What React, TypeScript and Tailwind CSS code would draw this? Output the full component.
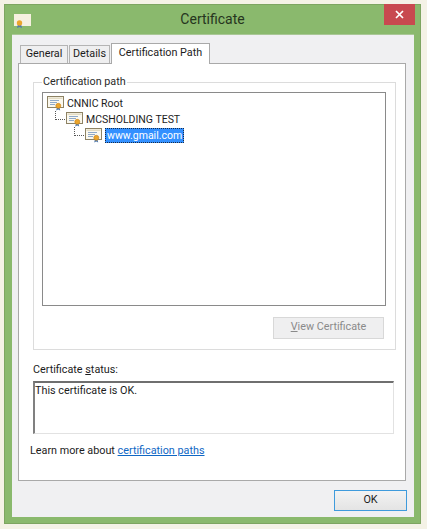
import React from "react";

function CertIcon({ className }: { className?: string }) {
    return (
        <svg viewBox="0 0 17 15" className={className}>
            <rect x="0.5" y="0.5" width="16" height="11" fill="#fbf8ee" stroke="#8d8264" />
            <rect x="1.5" y="1.5" width="14" height="1.5" fill="#e3dcc4" />
            <path d="M3 4.5h9M3 6.5h7M3 8.5h5" stroke="#8fa9c9" strokeWidth="1" fill="none" />
            <path d="M10 11l-.8 3.6 2-1 2 1L12.400 11z" fill="#4f79ad" />
            <circle cx="11.300" cy="9.800" r="2.500" fill="#eba52c" stroke="#c67f17" strokeWidth="0.6" />
        </svg>
    );
}

function Tab({ label, width, active }: { label: string; width: number; active?: boolean }) {
    if (active) {
        return (
            <div
                className="relative z-10 mb-[-1px] flex h-[21px] items-center justify-center border border-b-0 border-[#a9a9a9] bg-white pb-[2px]"
                style={{ width }}
            >
                {label}
            </div>
        );
    }
    return (
        <div
            className="flex h-[18px] items-center justify-center border border-b-0 border-[#b4b4b4] bg-[#efeff0]"
            style={{ width }}
        >
            {label}
        </div>
    );
}

function TreeRow({ label, indent, selected }: { label: string; indent: number; selected?: boolean }) {
    return (
        <div className="flex h-[16px] items-center text-[10.5px]" style={{ paddingLeft: indent }}>
            {indent > 4 && (
                <div className="mt-[-8px] mr-[1px] ml-[-11px] h-[9px] w-[10px] border-b border-l border-dotted border-[#555555]" />
            )}
            <CertIcon className="h-[15px] w-[17px] shrink-0" />
            <span
                className={
                    selected
                        ? "ml-[3px] flex h-[15px] items-center border border-dotted border-[#1b2c44] bg-[#3390ff] px-[1px] text-white"
                        : "ml-[2px] px-[1px]"
                }
            >
                {label}
            </span>
        </div>
    );
}

export default function App() {
    return (
        <div className="h-[529px] w-[427px] bg-[#f4f2e6] pt-[4px] pl-[4px] font-['Roboto',sans-serif] text-[10.8px] leading-none text-[#1c1c1c]">
            <div className="flex h-[520px] w-[417px] flex-col border border-[#7da561] bg-[#8ab96d]">
                <div className="relative flex h-[29px] shrink-0 items-center justify-center pb-[1px]">
                    <svg viewBox="0 0 17 14" className="absolute top-[9px] left-[9px] h-[14px] w-[17px]">
                        <rect x="0" y="0" width="17" height="12" fill="#f6f0e0" />
                        <path d="M4 10l-1 4 2.500-1 2.500 1-1-4z" fill="#4f79ad" />
                        <circle cx="5.500" cy="9" r="2.700" fill="#eba52c" />
                    </svg>
                    <span className="text-[14px] text-[#26351e]">Certificate</span>
                    <div className="absolute top-[-1px] right-[5px] flex h-[21px] w-[31px] items-center justify-center bg-[#c8494f]">
                        <svg viewBox="0 0 9 9" className="h-[9px] w-[9px]">
                            <path d="M1 1l7 7M8 1l-7 7" stroke="#ffffff" strokeWidth="1.700" fill="none" />
                        </svg>
                    </div>
                </div>

                <div className="mr-[6px] ml-[7px] flex h-[483px] flex-col border-t border-[#a9c796] bg-[#f0f0f2] px-[6px] pt-[8px]">
                    <div className="flex items-end pl-[2px]">
                        <Tab label="General" width={48} />
                        <div className="w-[1px]" />
                        <Tab label="Details" width={41} />
                        <div className="w-[1px]" />
                        <Tab label="Certification Path" width={99} active />
                    </div>

                    <div className="flex h-[418px] w-[388px] flex-col border border-[#a9a9a9] bg-white pt-[13px] pl-[14px]">
                        <fieldset className="h-[273px] w-[363px] border border-[#dcdcdc] px-[8px]">
                            <legend className="px-[1px] text-[#2a2a2a]">
                                Certification path
                            </legend>
                            <div className="mt-[4px] h-[214px] w-[344px] border border-[#8a8a8a] pt-[3px]">
                                <TreeRow label="CNNIC Root" indent={4} />
                                <TreeRow label="MCSHOLDING TEST" indent={23} />
                                <TreeRow label="www.gmail.com" indent={42} selected />
                            </div>
                            <div className="mt-[11px] ml-[231px] flex h-[22px] w-[111px] items-center justify-center border border-[#d8d8d8] bg-[#efeff0] text-[#8a8a8a]">
                                <span>
                                    <span className="underline">V</span>iew Certificate
                                </span>
                            </div>
                        </fieldset>

                        <div className="mt-[15px] h-[12px]">
                            Certificate <span className="underline">s</span>tatus:
                        </div>
                        <div className="mt-[4px] h-[53px] w-[361px] border-t-2 border-r border-b border-l-2 border-t-[#6f6f6f] border-r-[#e2e2e2] border-b-[#e2e2e2] border-l-[#808080] pt-[3px]">
                            This certificate is OK.
                        </div>
                        <div className="mt-[12px] ml-[-3px]">
                            Learn more about{" "}
                            <span className="text-[#0f67c4] underline">certification paths</span>
                        </div>
                    </div>

                    <div className="mt-[9px] ml-[316px] flex h-[21px] w-[73px] items-center justify-center border border-[#3f9bdc] bg-gradient-to-b from-[#f3f3f3] to-[#e4e4e4]">
                        OK
                    </div>
                </div>
            </div>
        </div>
    );
}
